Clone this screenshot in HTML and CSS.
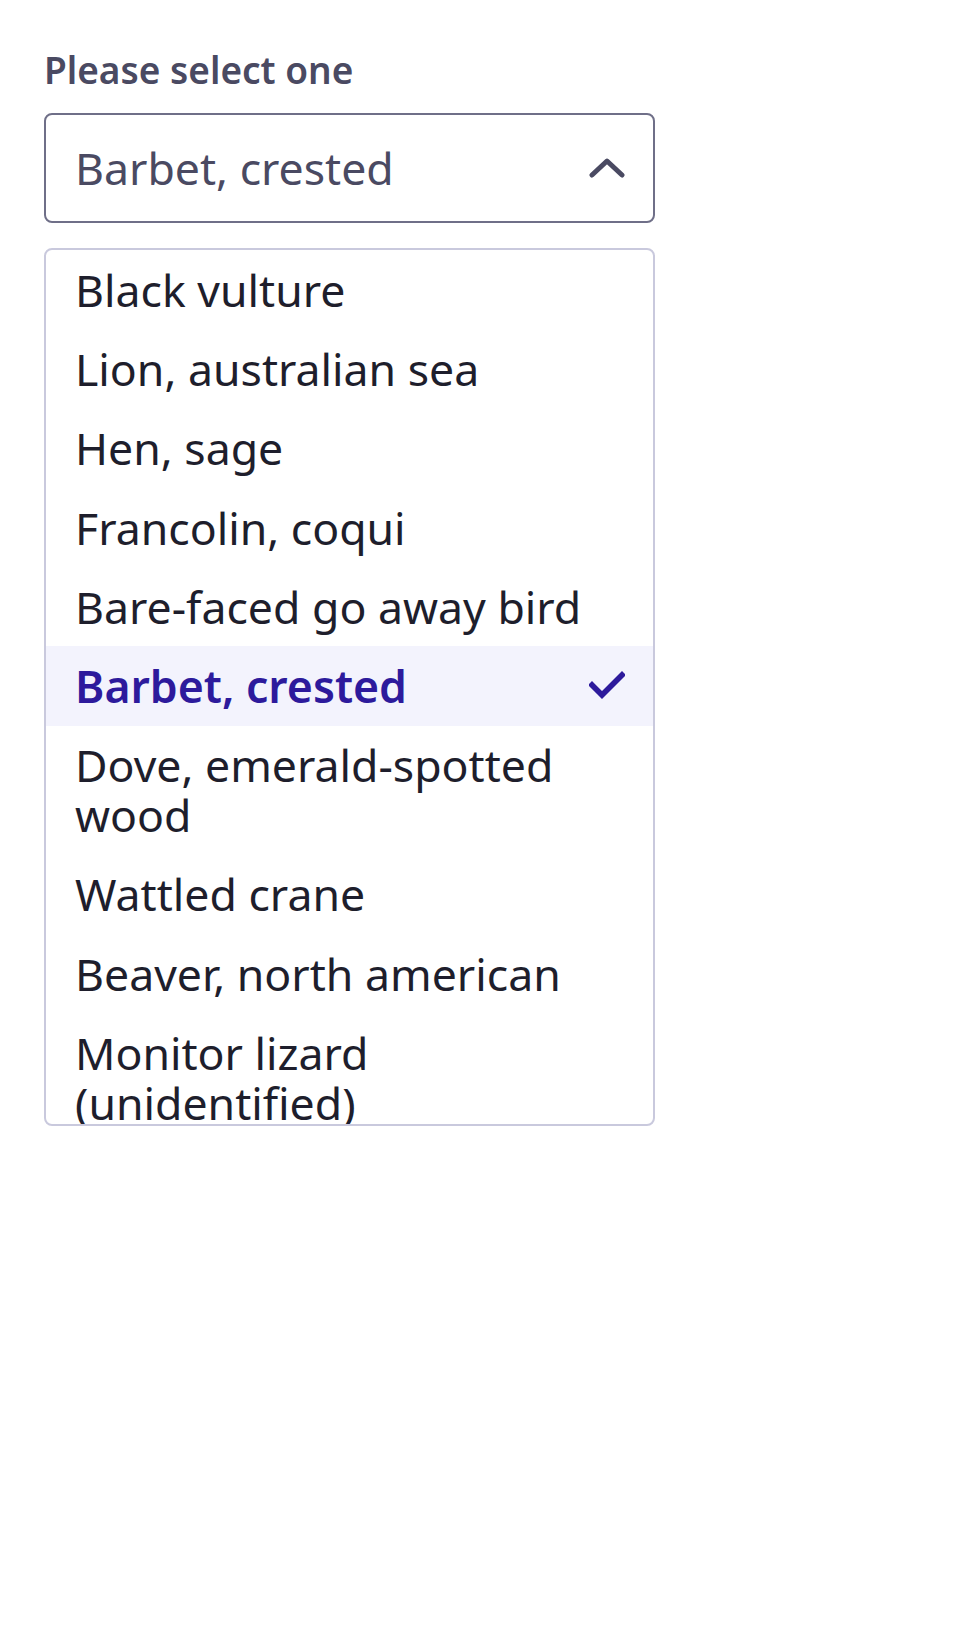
FILE: index.html
```html
<!DOCTYPE html>
<html lang="en">
<head>
<meta charset="utf-8">
<title>Select</title>
<link rel="stylesheet" href="styles.css">
</head>
<body>
<div class="field">
  <label class="label" id="lbl">Please select one</label>
  <button class="select" aria-labelledby="lbl" aria-expanded="true">
    <span class="select-value">Barbet, crested</span>
    <svg class="chevron" width="36" height="22" viewBox="0 0 36 22" aria-hidden="true">
      <path d="M3 18 L18 4 L33 18" fill="none" stroke="currentColor" stroke-width="5" stroke-linecap="round" stroke-linejoin="round"/>
    </svg>
  </button>
  <ul class="listbox" role="listbox">
    <li class="option">Black vulture</li>
    <li class="option">Lion, australian sea</li>
    <li class="option">Hen, sage</li>
    <li class="option">Francolin, coqui</li>
    <li class="option">Bare-faced go away bird</li>
    <li class="option selected" aria-selected="true"><span>Barbet, crested</span>
      <svg class="check" width="36" height="30" viewBox="0 0 36 30" aria-hidden="true">
        <path d="M3 14 L13 24 L33 4" fill="none" stroke="currentColor" stroke-width="5.5" stroke-linecap="square" stroke-linejoin="miter"/>
      </svg>
    </li>
    <li class="option">Dove, emerald-spotted wood</li>
    <li class="option">Wattled crane</li>
    <li class="option">Beaver, north american</li>
    <li class="option">Monitor lizard (unidentified)</li>
    <li class="option">Gecko, tokay</li>
    <li class="option">Heron, grey</li>
  </ul>
</div>
</body>
</html>
```
FILE: styles.css
```css
html, body {
  margin: 0;
  padding: 0;
  background: #ffffff;
}
body {
  font-family: "Noto Sans", "Open Sans", sans-serif;
}
.field {
  display: flex;
  flex-direction: column;
  width: 611px;
  padding: 46px 0 0 44px;
}
.label {
  font-size: 37px;
  font-weight: 600;
  line-height: 48px;
  color: #4a4a62;
  margin-bottom: 19px;
}
.select {
  display: flex;
  align-items: center;
  justify-content: space-between;
  box-sizing: border-box;
  height: 110px;
  width: 100%;
  padding: 0 28px 0 29px;
  border: 2px solid #6f6f88;
  border-radius: 8px;
  background: #ffffff;
  font-family: inherit;
  font-size: 44.6px;
  color: #4a4a62;
  text-align: left;
  cursor: pointer;
}
.select-value {
  line-height: 50px;
}
.chevron {
  color: #4a4a62;
  display: block;
}
.listbox {
  list-style: none;
  margin: 25px 0 0 0;
  padding: 1px 0 0 0;
  box-sizing: border-box;
  height: 878px;
  overflow: hidden;
  border: 2px solid #c9c9dd;
  border-radius: 8px;
}
.option {
  display: flex;
  align-items: center;
  justify-content: space-between;
  padding: 14.3px 28px 14.3px 29px;
  font-size: 44.6px;
  line-height: 50.5px;
  color: #1e1e2c;
}
.option.selected {
  background: #f3f3fd;
  color: #2d1a9c;
  font-weight: 600;
}
.check {
  display: block;
  flex: none;
  color: #2d1a9c;
}
```
